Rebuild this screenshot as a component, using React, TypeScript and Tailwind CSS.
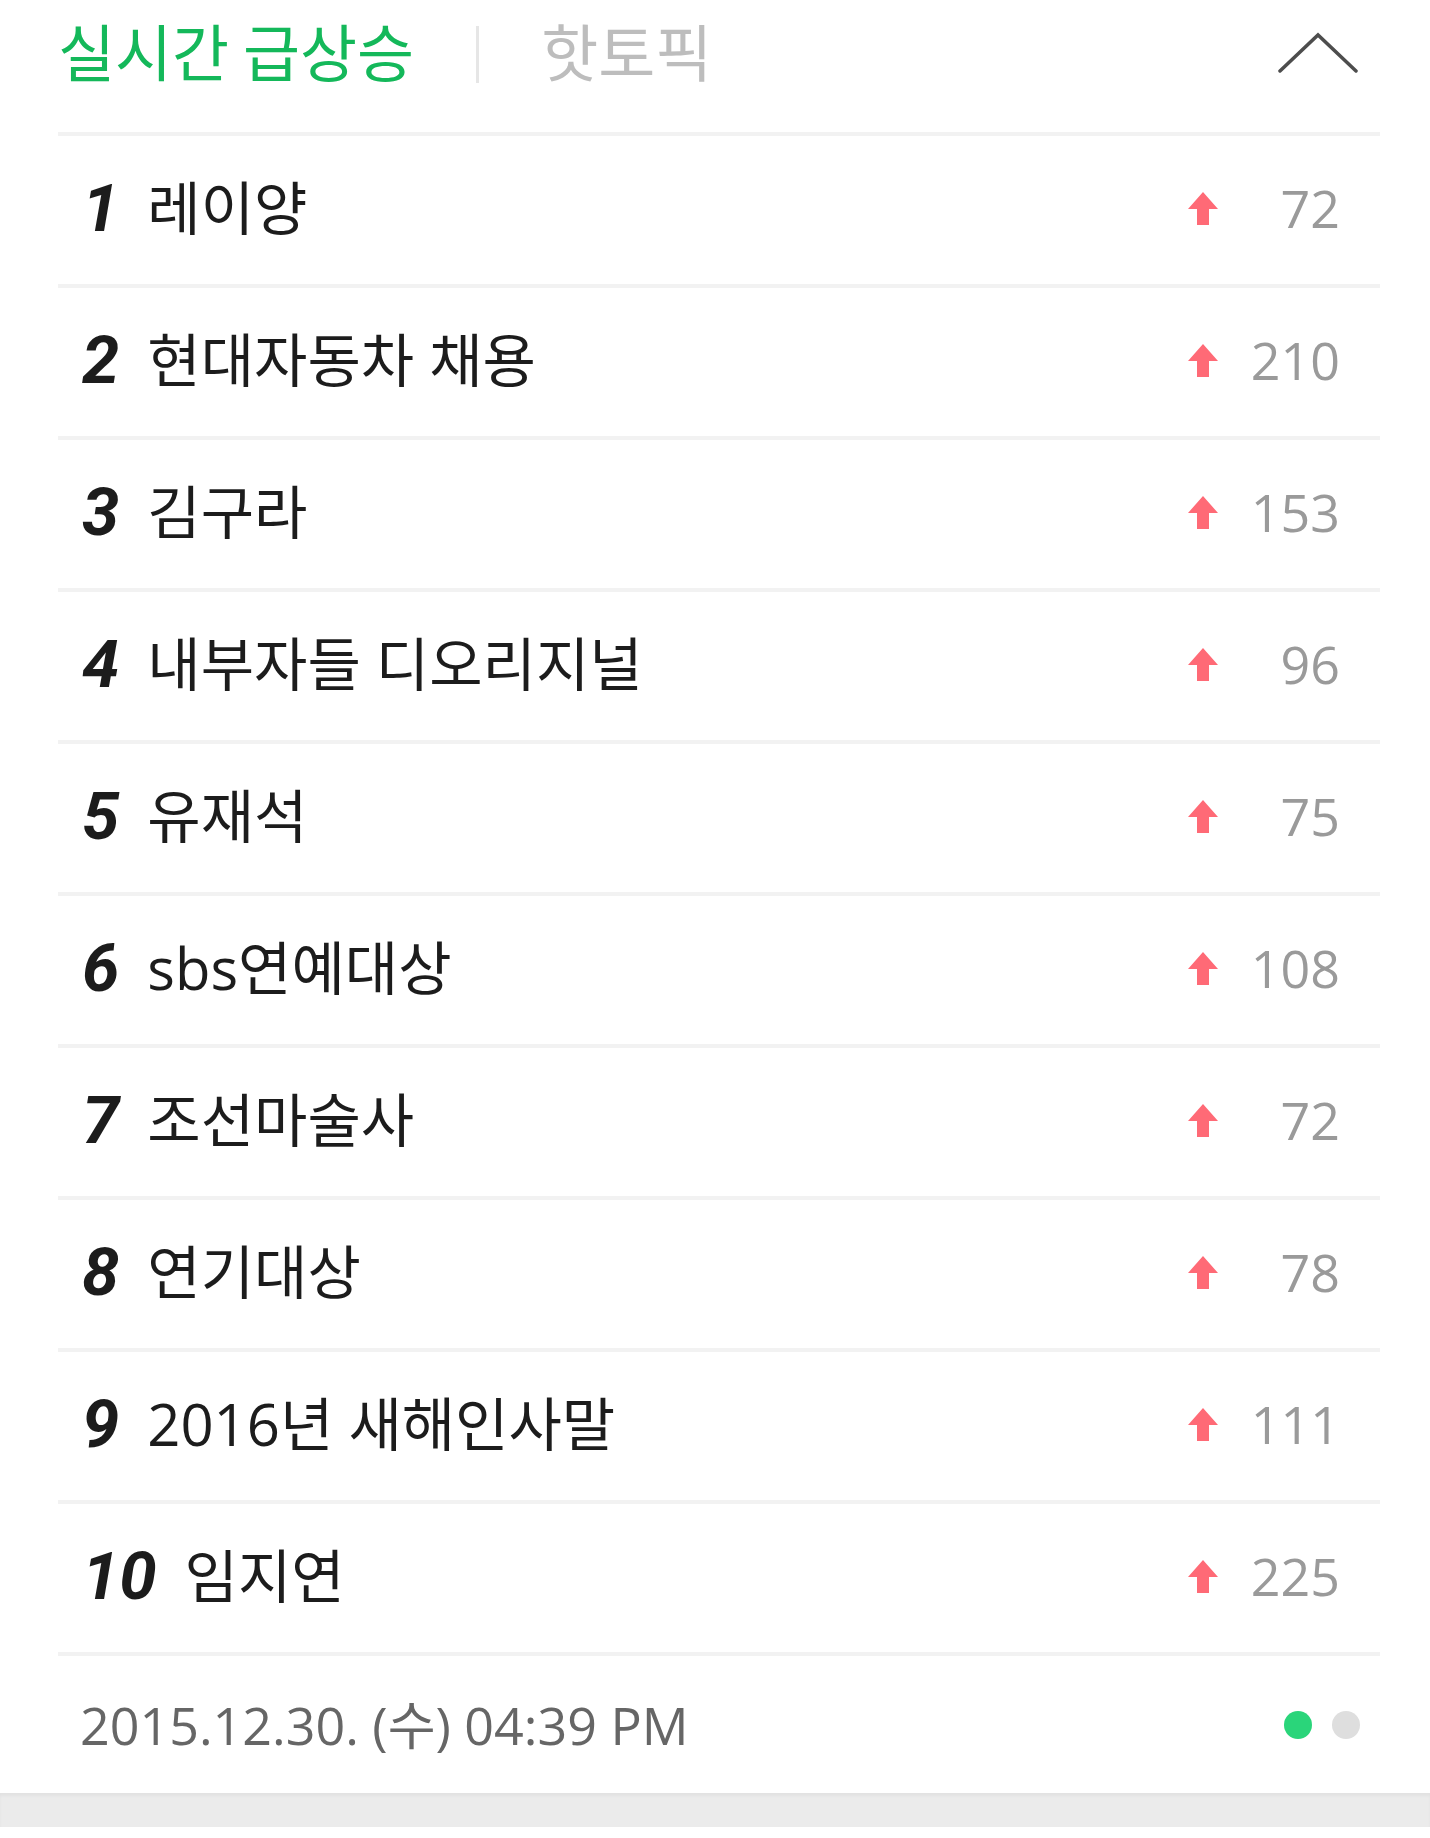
import React from 'react';

const items = [
  { rank: 1, keyword: '레이양', count: 72 },
  { rank: 2, keyword: '현대자동차 채용', count: 210 },
  { rank: 3, keyword: '김구라', count: 153 },
  { rank: 4, keyword: '내부자들 디오리지널', count: 96 },
  { rank: 5, keyword: '유재석', count: 75 },
  { rank: 6, keyword: 'sbs연예대상', count: 108 },
  { rank: 7, keyword: '조선마술사', count: 72 },
  { rank: 8, keyword: '연기대상', count: 78 },
  { rank: 9, keyword: '2016년 새해인사말', count: 111 },
  { rank: 10, keyword: '임지연', count: 225 },
];

const korean = { fontFamily: '"Open Sans", "Noto Sans CJK KR", sans-serif' };

const UpArrow = () => (
  <svg width="30" height="33" viewBox="0 0 30 33" className="shrink-0">
    <polygon points="15,0 30,17 21,17 21,33 9,33 9,17 0,17" fill="#ff6a76" />
  </svg>
);

const App = () => {
  return (
    <div className="w-full min-h-screen bg-white">
      <div className="pl-[58px] pr-[50px]">
        {/* Tabs */}
        <div className="flex items-start h-[136px] border-b-4 border-[#f2f2f2] pt-[19px]">
          <span
            className="text-[62px] leading-none text-[#14b85a]"
            style={{ fontFamily: '"Noto Sans CJK KR", sans-serif' }}
          >
            실시간 급상승
          </span>
          <span className="mx-[62px] mt-[7px] w-[3px] h-[57px] bg-[#e6e6e6]"></span>
          <span
            className="text-[62px] leading-none text-[#bdbdbd]"
            style={{ fontFamily: '"Noto Sans CJK KR", sans-serif' }}
          >
            핫토픽
          </span>
          <div className="ml-auto mr-[22px] mt-[13px]">
            <svg width="80" height="42" viewBox="0 0 80 42">
              <polyline
                points="2,39 40,3 78,39"
                fill="none"
                stroke="#4d4d4d"
                strokeWidth="3.5"
                strokeLinecap="round"
                strokeLinejoin="miter"
              />
            </svg>
          </div>
        </div>

        {/* Ranking list */}
        {items.map((item) => (
          <div
            key={item.rank}
            className="flex items-center h-[152px] border-b-4 border-[#f2f2f2] pl-[24px] pr-[40px] pb-[4px]"
          >
            <span
              className="text-[67px] leading-none font-bold italic text-[#1c1c1c] mr-[28px]"
              style={{ fontFamily: 'Roboto, sans-serif' }}
            >
              {item.rank}
            </span>
            <span className="text-[58px] leading-none text-[#1c1c1c]" style={korean}>
              {item.keyword}
            </span>
            <div className="ml-auto flex items-center">
              <UpArrow />
              <span
                className="w-[122px] text-right text-[52px] leading-none text-[#9a9a9a]"
                style={{ fontFamily: '"Open Sans", sans-serif' }}
              >
                {item.count}
              </span>
            </div>
          </div>
        ))}

        {/* Footer */}
        <div className="flex items-center h-[137px] pl-[22px] pr-[20px]">
          <span
            className="text-[52px] leading-none text-[#666666]"
            style={{ fontFamily: '"Open Sans", "Noto Sans CJK KR", sans-serif' }}
          >
            2015.12.30. (수) 04:39 PM
          </span>
          <div className="ml-auto flex items-center gap-[20px]">
            <span className="w-[28px] h-[28px] rounded-full bg-[#2ad57a]"></span>
            <span className="w-[28px] h-[28px] rounded-full bg-[#dedede]"></span>
          </div>
        </div>
      </div>
      <div className="h-[34px] bg-[#ebebeb] shadow-[inset_0_3px_3px_rgba(0,0,0,0.04)]"></div>
    </div>
  );
};

export default App;
